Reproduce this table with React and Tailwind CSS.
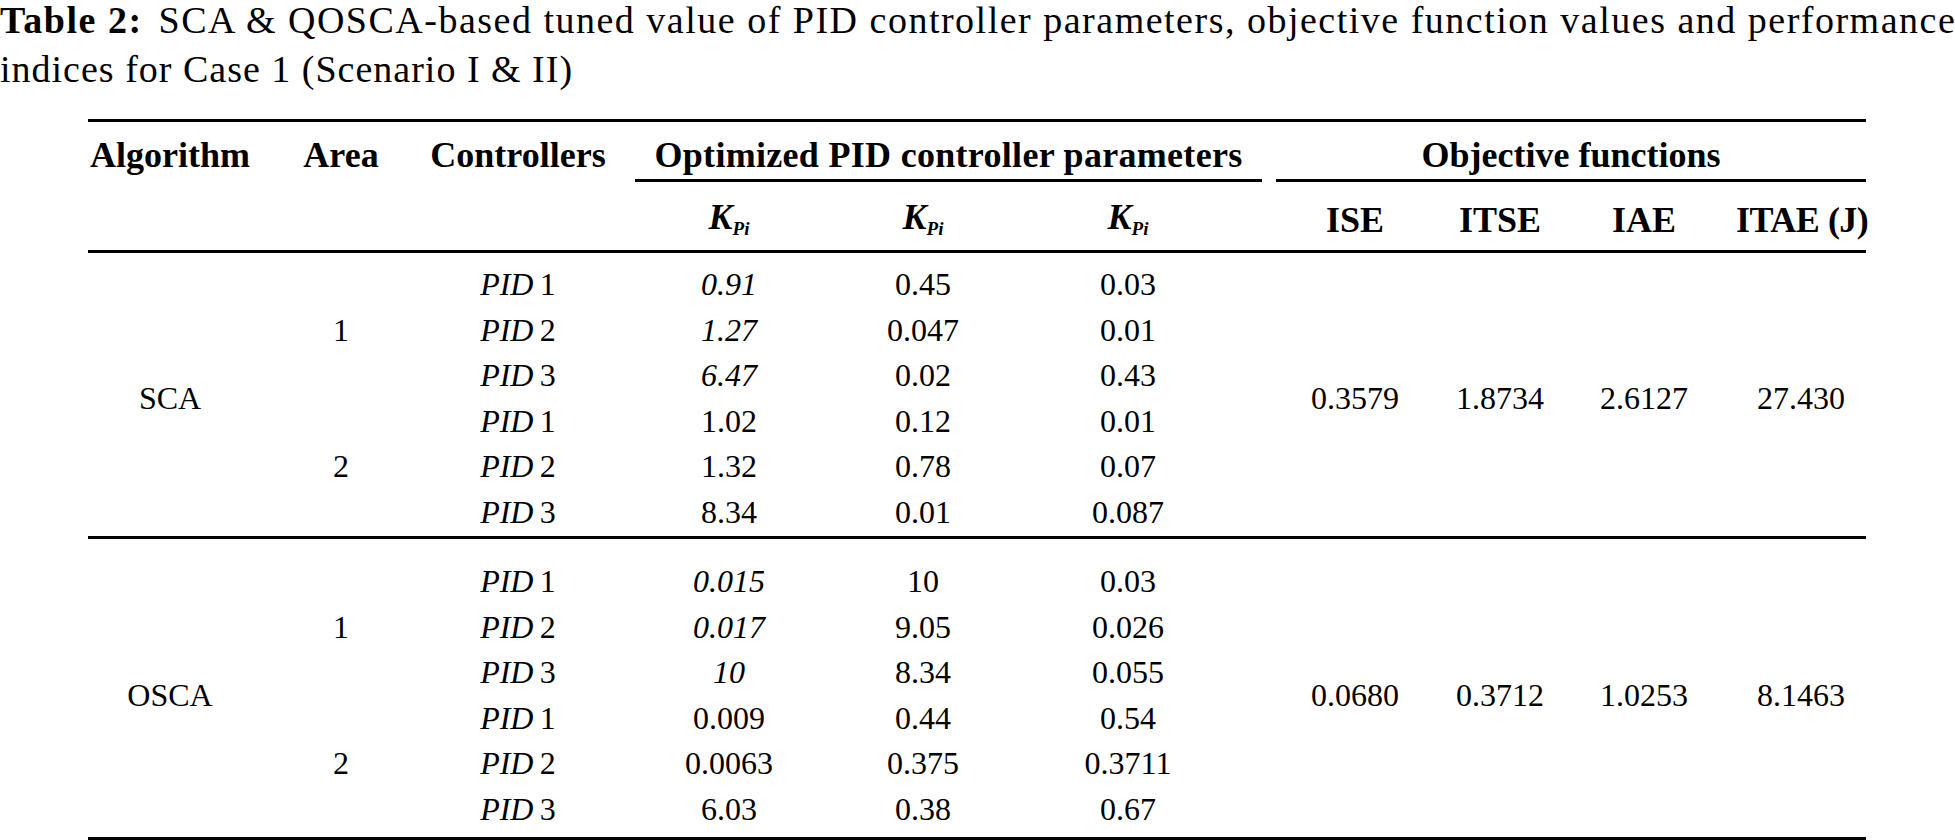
const serif = { fontFamily: '"Liberation Serif", "Times New Roman", serif' };

const groups = [
  {
    name: "SCA",
    rows: [
      ["1", "0.91", "0.45", "0.03", true],
      ["2", "1.27", "0.047", "0.01", true],
      ["3", "6.47", "0.02", "0.43", true],
      ["1", "1.02", "0.12", "0.01", false],
      ["2", "1.32", "0.78", "0.07", false],
      ["3", "8.34", "0.01", "0.087", false],
    ],
    objective: ["0.3579", "1.8734", "2.6127", "27.430"],
    padTop: "pt-[9px]",
    padBottom: "pb-[1px]",
  },
  {
    name: "OSCA",
    rows: [
      ["1", "0.015", "10", "0.03", true],
      ["2", "0.017", "9.05", "0.026", true],
      ["3", "10", "8.34", "0.055", true],
      ["1", "0.009", "0.44", "0.54", false],
      ["2", "0.0063", "0.375", "0.3711", false],
      ["3", "6.03", "0.38", "0.67", false],
    ],
    objective: ["0.0680", "0.3712", "1.0253", "8.1463"],
    padTop: "pt-[20px]",
    padBottom: "pb-[5px]",
  },
];

function Kpi() {
  return (
    <span className="font-bold italic">
      K
      <span className="relative top-[6px] text-[19px]">Pi</span>
    </span>
  );
}

function GroupRows({ group }) {
  const { name, rows, objective, padTop, padBottom } = group;
  return rows.map((r, i) => {
    const first = i === 0;
    const last = i === rows.length - 1;
    const pad = `${first ? padTop : ""} ${last ? padBottom + " border-b-[3px] border-black" : ""}`;
    return (
      <tr key={i} className="leading-[45.5px]">
        {first && (
          <td rowSpan={6} className={`${padTop} ${padBottom} border-b-[3px] border-black align-middle`}>
            {name}
          </td>
        )}
        {(i === 0 || i === 3) && (
          <td
            rowSpan={3}
            className={`align-middle ${i === 0 ? padTop : padBottom + " border-b-[3px] border-black"}`}
          >
            {i === 0 ? "1" : "2"}
          </td>
        )}
        <td className={pad}>
          <span className="italic">PID</span>
          {"\u2009" + r[0]}
        </td>
        <td className={`${pad} ${r[4] ? "italic" : ""}`}>{r[1]}</td>
        <td className={pad}>{r[2]}</td>
        <td className={pad}>{r[3]}</td>
        {first &&
          objective.map((v, j) => (
            <td key={j} rowSpan={6} className={`${padTop} ${padBottom} border-b-[3px] border-black align-middle`}>
              {v}
            </td>
          ))}
      </tr>
    );
  });
}

export default function App() {
  return (
    <div className="min-h-screen w-[1955px] overflow-hidden bg-white text-black" style={serif}>
      <div className="text-[38px] whitespace-nowrap">
        <div className="h-[38px] pt-[2px] leading-[36px] tracking-[1.5px]">
          <span className="font-bold">Table 2:</span>
          <span className="ml-[16px]">
            SCA &amp; QOSCA-based tuned value of PID controller parameters, objective function values and performance
          </span>
        </div>
        <div className="h-[62px] leading-[62px] tracking-[1px]">indices for Case 1 (Scenario I &amp; II)</div>
      </div>

      <table className="ml-[88px] mt-[19px] w-[1778px] table-fixed border-separate border-spacing-0 text-center">
        <colgroup>
          <col className="w-[164px]" />
          <col className="w-[178px]" />
          <col className="w-[176px]" />
          <col className="w-[246px]" />
          <col className="w-[142px]" />
          <col className="w-[268px]" />
          <col className="w-[186px]" />
          <col className="w-[104px]" />
          <col className="w-[184px]" />
          <col className="w-[130px]" />
        </colgroup>
        <thead className="text-[36px] font-bold leading-[44px] whitespace-nowrap">
          <tr>
            <th rowSpan={2} className="border-y-[3px] border-black pt-[11px] align-top font-bold">
              Algorithm
            </th>
            <th rowSpan={2} className="border-y-[3px] border-black pt-[11px] align-top font-bold">
              Area
            </th>
            <th rowSpan={2} className="border-y-[3px] border-black pt-[11px] align-top font-bold">
              Controllers
            </th>
            <th colSpan={3} className="border-t-[3px] border-black pt-[11px] align-top font-bold">
              <div className="ml-[29px]">
                <div className="h-[44px] tracking-[0.3px]">Optimized PID controller parameters</div>
                <div className="mt-[2px] h-[3px] bg-black" />
              </div>
            </th>
            <th colSpan={4} className="border-t-[3px] border-black pt-[11px] align-top font-bold">
              <div className="ml-[14px]">
                <div className="h-[44px]">Objective functions</div>
                <div className="mt-[2px] h-[3px] bg-black" />
              </div>
            </th>
          </tr>
          <tr>
            {[0, 1, 2].map((k) => (
              <th key={k} className="h-[66px] border-b-[3px] border-black pt-[13px] pb-[5px]">
                <Kpi />
              </th>
            ))}
            {["ISE", "ITSE", "IAE"].map((h) => (
              <th key={h} className="h-[66px] border-b-[3px] border-black pt-[13px] pb-[5px] font-bold">
                {h}
              </th>
            ))}
            <th className="h-[66px] border-b-[3px] border-black pt-[13px] pb-[5px] font-bold tracking-[-0.5px]">
              ITAE (J)
            </th>
          </tr>
        </thead>
        <tbody className="text-[32px] whitespace-nowrap">
          {groups.map((g) => (
            <GroupRows key={g.name} group={g} />
          ))}
        </tbody>
      </table>
    </div>
  );
}
